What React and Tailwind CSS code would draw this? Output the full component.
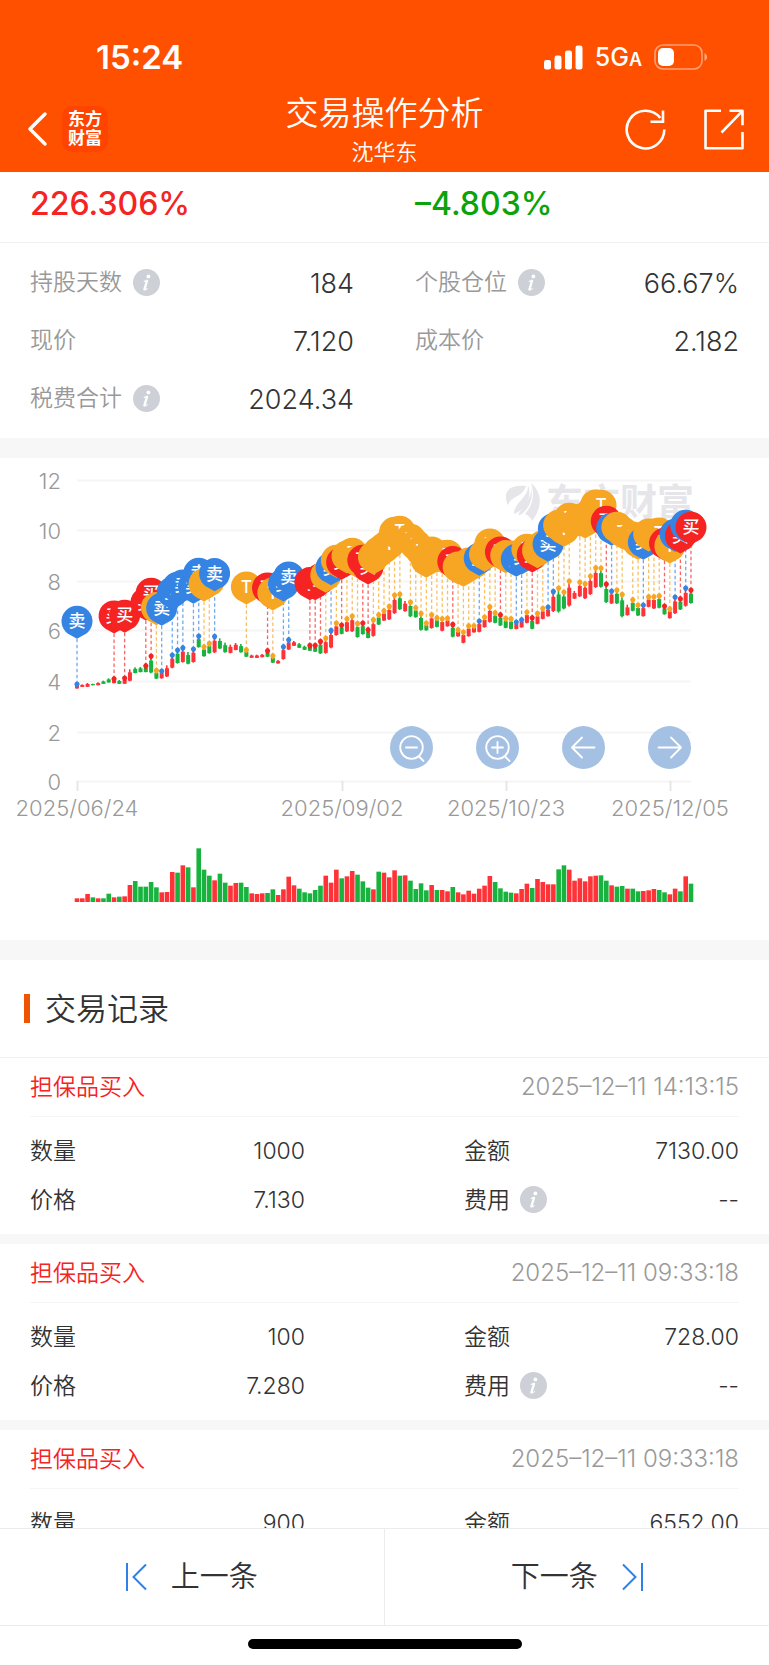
import React from 'react';

const FONT = 'font-[Inter,"Noto_Sans_CJK_SC",sans-serif]';

const stats = [
  { label: '持股天数', value: '184', info: true },
  { label: '个股仓位', value: '66.67%', info: true },
  { label: '现价', value: '7.120' },
  { label: '成本价', value: '2.182' },
  { label: '税费合计', value: '2024.34', info: true },
];

const records = [
  { id: 1, type: '担保品买入', time: '2025–12–11 14:13:15', qty: '1000', amount: '7130.00', price: '7.130', fee: '--' },
  { id: 2, type: '担保品买入', time: '2025–12–11 09:33:18', qty: '100', amount: '728.00', price: '7.280', fee: '--' },
  { id: 3, type: '担保品买入', time: '2025–12–11 09:33:18', qty: '900', amount: '6552.00', price: '7.280', fee: '--' },
];

// one row per trading day: direction, volume, high, low, mark (B buy, S sell, T both)
const days = [
  ['r', 11, 673, 686, 'S'], ['r', 11, 673, 681], ['r', 24, 669, 681], ['g', 14, 671, 676], ['r', 11, 667, 676],
  ['g', 11, 662, 672], ['g', 25, 655, 668], ['r', 14, 657, 670, 'B'], ['g', 16, 660, 672], ['r', 17, 655, 672, 'B'],
  ['r', 51, 628, 664], ['g', 63, 622, 640], ['g', 46, 621, 637], ['g', 46, 618, 637, 'B'], ['g', 60, 589, 640, 'B'],
  ['g', 44, 632, 657, 'T'], ['r', 29, 634, 656, 'S'], ['r', 30, 616, 651], ['r', 90, 586, 625, 'S'], ['g', 88, 571, 611, 'S'],
  ['r', 110, 564, 608, 'S'], ['g', 104, 576, 613], ['r', 44, 568, 608, 'S'], ['g', 161, 529, 563, 'S'], ['g', 97, 561, 590, 'T'],
  ['g', 79, 551, 581, 'T'], ['r', 65, 530, 579, 'S'], ['g', 85, 535, 567], ['g', 58, 548, 578], ['r', 49, 554, 580],
  ['r', 57, 549, 571], ['g', 58, 552, 578], ['g', 45, 570, 591, 'T'], ['r', 26, 584, 594], ['r', 24, 584, 594],
  ['r', 26, 582, 592], ['g', 27, 573, 591, 'B'], ['g', 38, 588, 609, 'T'], ['r', 21, 600, 611], ['r', 38, 561, 599, 'S'],
  ['r', 76, 540, 570, 'S'], ['r', 50, 543, 558], ['g', 40, 549, 564], ['g', 29, 557, 570], ['g', 26, 557, 573, 'B'],
  ['g', 36, 557, 576, 'B'], ['g', 49, 545, 582, 'B'], ['r', 79, 535, 581, 'T'], ['r', 58, 512, 565, 'S'], ['r', 97, 490, 527, 'T'],
  ['g', 71, 496, 523, 'B'], ['r', 77, 477, 516, 'T'], ['r', 93, 469, 516, 'T'], ['g', 82, 491, 533, 'T'], ['g', 62, 490, 524, 'B'],
  ['g', 43, 510, 535, 'B'], ['r', 38, 480, 530, 'T'], ['g', 91, 465, 495, 'T'], ['r', 88, 453, 483, 'T'], ['r', 74, 440, 480, 'T'],
  ['r', 95, 406, 462, 'T'], ['g', 79, 403, 450, 'T'], ['r', 80, 423, 455], ['g', 64, 427, 471, 'T'], ['g', 39, 444, 473, 'T'],
  ['g', 56, 461, 512, 'T'], ['g', 35, 490, 512, 'T'], ['r', 51, 465, 506, 'T'], ['g', 36, 474, 502, 'T'], ['r', 36, 477, 514, 'T'],
  ['r', 32, 475, 500, 'T'], ['g', 45, 494, 532, 'B'], ['r', 29, 510, 530, 'T'], ['r', 23, 517, 550, 'T'], ['r', 34, 498, 530, 'T'],
  ['r', 25, 498, 518, 'T'], ['r', 40, 484, 517, 'S'], ['r', 49, 472, 503, 'T'], ['r', 78, 441, 488, 'T'], ['g', 60, 459, 490, 'T'],
  ['g', 41, 465, 498, 'B'], ['g', 31, 476, 505, 'T'], ['g', 28, 477, 508, 'T'], ['r', 26, 487, 508, 'S'], ['r', 39, 480, 503, 'S'],
  ['r', 55, 457, 490, 'T'], ['g', 42, 474, 508, 'B'], ['r', 69, 461, 493, 'T'], ['r', 60, 446, 478, 'T'], ['r', 53, 442, 470, 'S'],
  ['r', 53, 395, 456, 'S'], ['g', 98, 385, 458, 'T'], ['g', 110, 397, 448, 'T'], ['r', 97, 364, 440, 'T'], ['r', 64, 393, 417],
  ['r', 71, 367, 411, 'T'], ['r', 62, 372, 417, 'T'], ['r', 77, 349, 405, 'T'], ['r', 79, 324, 384, 'T'], ['g', 80, 325, 383, 'T'],
  ['g', 64, 373, 429, 'B'], ['r', 50, 394, 432, 'S'], ['g', 46, 391, 432, 'T'], ['g', 48, 404, 472, 'T'], ['r', 40, 434, 467],
  ['g', 40, 420, 454, 'T'], ['g', 32, 436, 468, 'T'], ['r', 33, 436, 470, 'S'], ['r', 35, 411, 442, 'T'], ['r', 39, 411, 447, 'T'],
  ['g', 36, 408, 445, 'T'], ['g', 29, 439, 464, 'B'], ['r', 23, 447, 476, 'T'], ['r', 40, 412, 462, 'S'], ['g', 32, 417, 450, 'B'],
  ['r', 77, 385, 440, 'S'], ['g', 55, 391, 431, 'B'],
];

const xOf = (i) => 77 + i * 5.293;
const yOf = (v) => 2 + v / 3;

const barColor = { r: '#ff3237', g: '#18b23e' };
const marks = {
  B: { color: '#f62323', text: '买' },
  S: { color: '#3584e4', text: '卖' },
  T: { color: '#f6a623', text: 'T' },
};

const grid = [
  { value: 12, y: 23 },
  { value: 10, y: 73 },
  { value: 8, y: 124 },
  { value: 6, y: 173 },
  { value: 4, y: 224 },
  { value: 2, y: 275 },
  { value: 0, y: 324 },
];

const dates = [
  { label: '2025/06/24', x: 77 },
  { label: '2025/09/02', x: 342 },
  { label: '2025/10/23', x: 506 },
  { label: '2025/12/05', x: 670 },
];

const InfoButton = ({ label }) => (
  <button type="button" aria-label={`${label}说明`} className="block shrink-0">
    <svg width="27" height="27" viewBox="0 0 27 27">
      <circle cx="13.5" cy="13.5" r="13.5" fill="#cdd0d6" />
      <circle cx="15.4" cy="7.4" r="1.9" fill="#fff" />
      <path d="M10.600 12.300c1.200-1 2.400-1.600 3.600-1.600.9 0 1.200.6.9 1.600l-2.100 7c-.2.7.2.8.7.5l1.100-.8.3.5c-1.200 1.300-2.400 2.100-3.600 2.100-1.100 0-1.500-.7-1.100-1.900l2-6.500c.2-.6-.1-.8-.5-.5l-1 .5z" fill="#fff" />
    </svg>
  </button>
);

const StatusBar = () => (
  <div className="flex h-[86px] items-center justify-between pt-7 pr-[61px] pl-24">
    <span className="text-[33px] leading-10 font-semibold">15:24</span>
    <div className="flex items-center">
      <svg width="39" height="25" viewBox="0 0 39 25" fill="#fff">
        <rect x="0" y="15" width="7" height="9.5" rx="2.2" />
        <rect x="10.5" y="10.5" width="7" height="14" rx="2.2" />
        <rect x="21" y="5.5" width="7" height="19" rx="2.2" />
        <rect x="31.5" y="0.5" width="7" height="24" rx="2.2" />
      </svg>
      <span className="ml-3 pt-[3px] text-[25px] leading-8 font-medium">
        5G<span className="text-[18px] font-semibold">A</span>
      </span>
      <svg className="ml-3" width="54" height="26" viewBox="0 0 54 26">
        <rect x="1" y="1" width="47" height="24" rx="8" fill="none" stroke="#fff" strokeOpacity="0.45" strokeWidth="1.6" />
        <rect x="4" y="4" width="16" height="18" rx="5" fill="#fff" />
        <path d="M50.500 9.200c1.600.6 2.600 2 2.600 3.800s-1 3.200-2.600 3.800z" fill="#fff" fillOpacity="0.5" />
      </svg>
    </div>
  </div>
);

const Header = () => (
  <header className="shrink-0 bg-[#ff5000] text-white">
    <StatusBar />
    <div className="grid h-[86px] grid-cols-[1fr_auto_1fr] items-center">
      <div className="flex items-center gap-[15px] pl-7">
        <button type="button" aria-label="返回">
          <svg width="19" height="34" viewBox="0 0 19 34" fill="none" stroke="#fff" strokeWidth="3.4" strokeLinecap="round" strokeLinejoin="round">
            <path d="M17 2 2 17l15 15" />
          </svg>
        </button>
        <span className="flex h-[46px] w-[46px] flex-col items-center justify-center rounded-[10px] bg-[#ff4400] text-[17px] leading-[19px] font-bold">
          <span>东方</span>
          <span>财富</span>
        </span>
      </div>
      <div className="pt-1 text-center font-[350]">
        <h1 className="text-[33px] leading-[42px]">交易操作分析</h1>
        <p className="text-[22px] leading-9">沈华东</p>
      </div>
      <div className="flex items-center justify-end gap-[38px] pr-[25px]">
        <button type="button" aria-label="刷新">
          <svg width="41" height="41" viewBox="0 0 41 41" fill="none" stroke="#fff" strokeWidth="2.6">
            <path d="M39.300 20.500a18.800 18.800 0 1 1-4-11.500" />
            <path d="M38 1.500v11.300H25.500" />
          </svg>
        </button>
        <button type="button" aria-label="分享">
          <svg width="40" height="41" viewBox="0 0 40 41" fill="none" stroke="#fff" strokeWidth="2.6" strokeLinejoin="round">
            <path d="M17 1.800H1.500v37.500h37V23" />
            <path d="M25.500 1.800h13v14.500M38 2.300 17.500 23.500" />
          </svg>
        </button>
      </div>
    </div>
  </header>
);

const Summary = () => (
  <section>
    <div className="grid h-[71px] grid-cols-2 gap-x-[61px] border-b border-[#f1f1f1] px-[30px] pt-3 text-[32px] leading-10 font-medium">
      <span className="text-[#f62323]">226.306%</span>
      <span className="text-[#0aa30a]">–4.803%</span>
    </div>
    <dl className="grid grid-cols-2 gap-x-[61px] px-[30px] pt-3 pb-[9px]">
      {stats.map((item) => (
        <div key={item.label} className="flex h-[58px] items-center justify-between">
          <dt className="flex items-center gap-[11px] pb-1 text-[23px] leading-8 font-[350] text-[#999]">
            {item.label}
            {item.info && <InfoButton label={item.label} />}
          </dt>
          <dd className="text-[27px] leading-9 font-[350] text-[#333]">{item.value}</dd>
        </div>
      ))}
    </dl>
  </section>
);

const Pin = ({ x, y, mark }) => {
  const { color, text } = marks[mark];
  return (
    <g>
      <path
        d={`M${x} ${y + 17.5}L${x - 9} ${y + 12.5}A15.5 15.5 0 1 1 ${x + 9} ${y + 12.5}Z`}
        fill={color}
      />
      <text x={x} y={y + 6} textAnchor="middle" fontSize="17" fontWeight="500" fill="#fff">{text}</text>
    </g>
  );
};

const chartActions = [
  { label: '缩小', path: 'M16 21.5h11', zoom: true },
  { label: '放大', path: 'M16 21.5h11M21.5 16v11', zoom: true },
  { label: '左移', path: 'M32.5 21.5H10.5M20 11.5l-10 10 10 10' },
  { label: '右移', path: 'M10.5 21.5h22M23 11.5l10 10-10 10' },
];

const Chart = () => (
  <section className="relative">
    <svg viewBox="0 0 769 482" className="block w-full" role="img" aria-label="股价走势与买卖点">
      {/* Axes */}
      {grid.map((line) => (
        <g key={line.value}>
          <path d={`M77 ${line.y - 0.5}H691`} stroke="#f5f5f5" strokeWidth="2" />
          <text x="61" y={line.y + 8} textAnchor="end" fontSize="22" fontWeight="350" fill="#999">{line.value}</text>
        </g>
      ))}
      {dates.map((d) => (
        <g key={d.label}>
          <path d={`M${d.x + 0.5} 323v10`} stroke="#e6e6e6" strokeWidth="2" />
          <text x={d.x} y="358" textAnchor="middle" fontSize="22" fontWeight="350" fill="#999">{d.label}</text>
        </g>
      ))}

      {/* Watermark */}
      <g fill="#e5e5ea">
        <path d="M526 28c-13-1-20 3-20 10 0 3 0 6 2 9 3-9 15-8 18-19z" />
        <path d="M528 27c1 13-14 17-14 29 9-3 19-15 14-29z" />
        <path d="M530 26c5 13-9 24-12 31 2 0 4-1 5-2 8-7 11-18 7-29z" />
        <path d="M531 25c11 9 12 24 1 38-1-3-4-6-7-7 8-9 10-20 6-31z" />
        <text x="546" y="58" fontSize="37" fontWeight="700">东方财富</text>
      </g>

      {/* Candles */}
      {days.map(([dir, , high, low], i) => {
        const x = xOf(i);
        const top = yOf(high);
        const range = (low - high) / 3;
        return (
          <g key={i} fill={barColor[dir]}>
            <rect x={x - 1} y={top} width="1.6" height={range} />
            <rect x={x - 2} y={top + range * 0.25} width="4" height={range * 0.7} />
          </g>
        );
      })}

      {/* Stems and dots */}
      {days.map(([, , high, , mark], i) => {
        if (!mark) return null;
        const x = xOf(i);
        const y = yOf(high);
        return (
          <g key={i}>
            <path d={`M${x} ${y}v-50`} stroke={marks[mark].color} strokeOpacity="0.7" strokeWidth="1.3" strokeDasharray="3.5 2.5" />
            <path d={`M${x} ${y + 3.5}l-2-2a2.6 2.6 0 1 1 4 0z`} fill={marks[mark].color} />
          </g>
        );
      })}

      {/* Pins */}
      {days.map(([, , high, , mark], i) => mark && (
        <Pin key={i} x={xOf(i)} y={yOf(high) - 63} mark={mark} />
      ))}

      {/* Volume */}
      {days.map(([dir, volume], i) => (
        <rect key={i} x={xOf(i) - 2.3} y={444 - volume / 3} width="4.6" height={volume / 3} fill={barColor[dir]} />
      ))}
    </svg>

    <div className="absolute top-[268px] right-[78px] flex gap-[43px]">
      {chartActions.map((action) => (
        <button key={action.label} type="button" aria-label={action.label} className="h-[43px] w-[43px] rounded-full bg-[#a4c1e4]">
          <svg viewBox="0 0 43 43" fill="none" stroke="#fff" strokeWidth="1.8" strokeLinecap="round" strokeLinejoin="round">
            {action.zoom && <circle cx="21.5" cy="21.5" r="11.3" />}
            {action.zoom && <path d="m29 30.5 4.500 4.500" />}
            <path d={action.path} />
          </svg>
        </button>
      ))}
    </div>
  </section>
);

const Field = ({ label, value, info }) => (
  <div className="flex h-[49px] items-center justify-between">
    <dt className="flex items-center gap-[10px]">
      {label}
      {info && <InfoButton label={label} />}
    </dt>
    <dd>{value}</dd>
  </div>
);

const Record = ({ record }) => (
  <li className="border-b-10 border-[#f7f7f7] font-[350]">
    <div className="mx-[30px] flex h-[59px] items-center justify-between border-b border-[#f5f5f5] leading-8">
      <span className="text-[23px] text-[#f62323]">{record.type}</span>
      <time className="text-[24px] text-[#999]">{record.time}</time>
    </div>
    <dl className="grid grid-cols-2 gap-x-[159px] px-[30px] pt-[9px] pb-[10px] text-[23px] leading-8 text-[#333]">
      <Field label="数量" value={record.qty} />
      <Field label="金额" value={record.amount} />
      <Field label="价格" value={record.price} />
      <Field label="费用" value={record.fee} info />
    </dl>
  </li>
);

const Footer = () => (
  <footer className="shrink-0 bg-white">
    <div className="grid h-[98px] grid-cols-2 border-y border-[#ececec] text-[29px] leading-10 font-[350] text-[#333]">
      <button type="button" className="flex items-center justify-center gap-[23px] border-r border-[#ececec]">
        <svg width="22" height="28" viewBox="0 0 22 28" fill="none" stroke="#2f80e7" strokeWidth="2">
          <path d="M1 0v28M20 1.500 7.500 14 20 26.500" />
        </svg>
        上一条
      </button>
      <button type="button" className="flex items-center justify-center gap-[23px]">
        下一条
        <svg width="22" height="28" viewBox="0 0 22 28" fill="none" stroke="#2f80e7" strokeWidth="2">
          <path d="M21 0v28M2 1.500 14.500 14 2 26.500" />
        </svg>
      </button>
    </div>
    <div className="flex h-[39px] items-start justify-center pt-[13px]">
      <span className="h-[10px] w-[274px] rounded-full bg-black" />
    </div>
  </footer>
);

const App = () => {
  return (
    <div className={`flex h-screen flex-col bg-white ${FONT}`}>
      <Header />
      <main className="min-h-0 flex-1 overflow-y-auto [scrollbar-width:none]">
        <Summary />
        <div className="h-5 bg-[#f7f7f7]" />
        <Chart />
        <div className="h-5 bg-[#f7f7f7]" />
        <section>
          <h2 className="flex h-[98px] items-center gap-[15px] border-b border-[#f1f1f1] pl-6 text-[31px] leading-10 font-[350] text-[#333]">
            <span className="h-[29px] w-[6px] bg-[#ee5500]" />
            交易记录
          </h2>
          <ul>
            {records.map((record) => (
              <Record key={record.id} record={record} />
            ))}
          </ul>
        </section>
      </main>
      <Footer />
    </div>
  );
};

export default App;
